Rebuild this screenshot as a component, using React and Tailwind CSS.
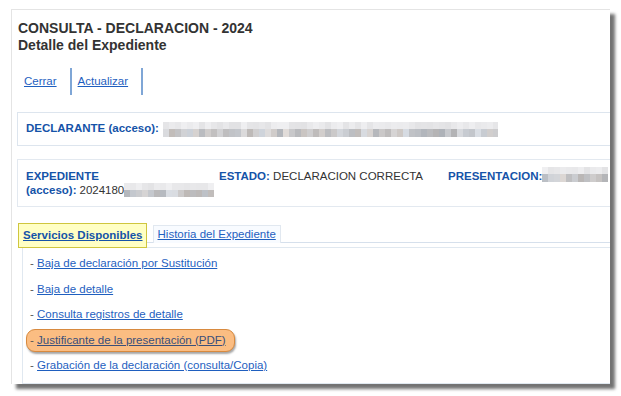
import React from "react";

function Mosaic({ width, height = 15, seed = 1, cell = 6 }) {
  const cols = Math.ceil(width / cell);
  let s = seed * 9301 + 49297;
  const rnd = () => {
    s = (s * 9301 + 49297) % 233280;
    return s / 233280;
  };
  const top = [];
  const bot = [];
  for (let i = 0; i < cols; i++) {
    const a = Math.round(226 + rnd() * 14);
    const b = Math.round(178 + rnd() * 44);
    const tint = Math.round((rnd() - 0.5) * 10);
    top.push(`rgb(${a},${a},${a + 2})`);
    bot.push(`rgb(${b + tint},${b},${b - tint + 2})`);
  }
  return (
    <span className="inline-flex flex-col align-middle overflow-hidden" style={{ width }}>
      <span className="flex" style={{ height: Math.floor(height / 2) }}>
        {top.map((c, i) => (
          <span key={i} style={{ background: c, width: cell, flexShrink: 0 }} />
        ))}
      </span>
      <span className="flex" style={{ height: Math.ceil(height / 2) }}>
        {bot.map((c, i) => (
          <span key={i} style={{ background: c, width: cell, flexShrink: 0 }} />
        ))}
      </span>
    </span>
  );
}

const items = [
  "Baja de declaración por Sustitución",
  "Baja de detalle",
  "Consulta registros de detalle",
  "Justificante de la presentación (PDF)",
  "Grabación de la declaración (consulta/Copia)",
];

export default function App() {
  return (
    <div
      className="w-[621px] h-[396px] bg-white pt-[9px] pl-[11px]"
      style={{ fontFamily: '"Liberation Sans", Arial, sans-serif' }}
    >
      <div className="relative w-[599px] h-[375px] bg-white border-t border-l border-[#e4e4e4] shadow-[5px_5px_3px_rgba(0,0,0,0.55)] overflow-hidden">
        {/* Title */}
        <div className="pl-[6px] pt-[10px] text-[14px] leading-[17px] font-bold text-[#333]">
          <div>CONSULTA - DECLARACION - 2024</div>
          <div>Detalle del Expediente</div>
        </div>

        {/* Toolbar */}
        <div className="flex mt-[14px] ml-[6px] h-[27px] items-center text-[11.5px]">
          <div className="h-full flex items-center pl-[6px] pr-[13px] border-r-2 border-[#7fa6d6]">
            <a className="text-[#1f5fbf] underline">Cerrar</a>
          </div>
          <div className="h-full flex items-center pl-[6px] pr-[13px] border-r-2 border-[#7fa6d6]">
            <a className="text-[#1f5fbf] underline">Actualizar</a>
          </div>
        </div>

        {/* Declarante box */}
        <div className="mt-[17px] ml-[5px] w-[640px] h-[34px] border border-[#dde5ee] flex items-center pl-[8px] text-[11.5px]">
          <span className="font-bold text-[#1553a8]">DECLARANTE (acceso):</span>
          <span className="ml-[4px]">
            <Mosaic width={335} seed={3} />
          </span>
        </div>

        {/* Expediente box */}
        <div className="mt-[13px] ml-[5px] w-[640px] h-[48px] border border-[#e3e9f0] flex pt-[10px] pl-[8px] text-[11.5px] leading-[13px]">
          <div className="w-[193px]">
            <div className="font-bold text-[#1553a8]">EXPEDIENTE</div>
            <div className="flex items-end">
              <span className="font-bold text-[#1553a8]">(acceso):</span>
              <span className="ml-[3px] text-[#333]">2024180</span>
              <Mosaic width={90} height={14} seed={7} />
            </div>
          </div>
          <div className="w-[229px]">
            <span className="font-bold text-[#1553a8]">ESTADO:</span>
            <span className="text-[#333]"> DECLARACION CORRECTA</span>
          </div>
          <div className="flex items-start">
            <span className="font-bold text-[#1553a8]">PRESENTACION:</span>
            <span className="-mt-[3px]">
              <Mosaic width={66} height={15} seed={11} />
            </span>
          </div>
        </div>

        {/* Tabs */}
        <div className="mt-[16px] ml-[6px] flex items-start border-b border-[#d6e0ec] h-[20px] text-[11.5px]">
          <div className="relative z-10 h-[25px] pl-[4px] pr-[3px] bg-[#ffffc4] border border-[#cfc63e] flex items-center">
            <a className="font-bold text-[#1553a8] underline">Servicios Disponibles</a>
          </div>
          <div className="ml-[6px] mt-[2px] h-[18px] px-[4px] bg-[#f8fbff] border border-b-0 border-[#e1e8f0] flex items-center">
            <a className="text-[#1f5fbf] underline">Historia del Expediente</a>
          </div>
        </div>

        {/* Panel */}
        <div className="ml-[10px] mt-[4px] w-[640px] h-[137px] border border-[#e0e8f0] pt-[3px] pl-[7px] text-[11.5px]">
          {items.map((t, i) =>
            i === 3 ? (
              <div key={t} className="h-[25.5px] flex items-center">
                <div className="-ml-[4px] h-[23px] flex items-center pl-[3px] pr-[8px] whitespace-nowrap rounded-[9px] bg-[#fbbd82] border border-[#d88a3f] shadow-[1px_2px_2px_rgba(0,0,0,0.35)]">
                  <span className="text-[#555]">-&nbsp;</span>
                  <a className="text-[#3a4f7a] underline">{t}</a>
                </div>
              </div>
            ) : (
              <div key={t} className="h-[25.5px] flex items-center whitespace-nowrap">
                <span className="text-[#555]">-&nbsp;</span>
                <a className="text-[#1f5fbf] underline">{t}</a>
              </div>
            )
          )}
        </div>
      </div>
    </div>
  );
}
